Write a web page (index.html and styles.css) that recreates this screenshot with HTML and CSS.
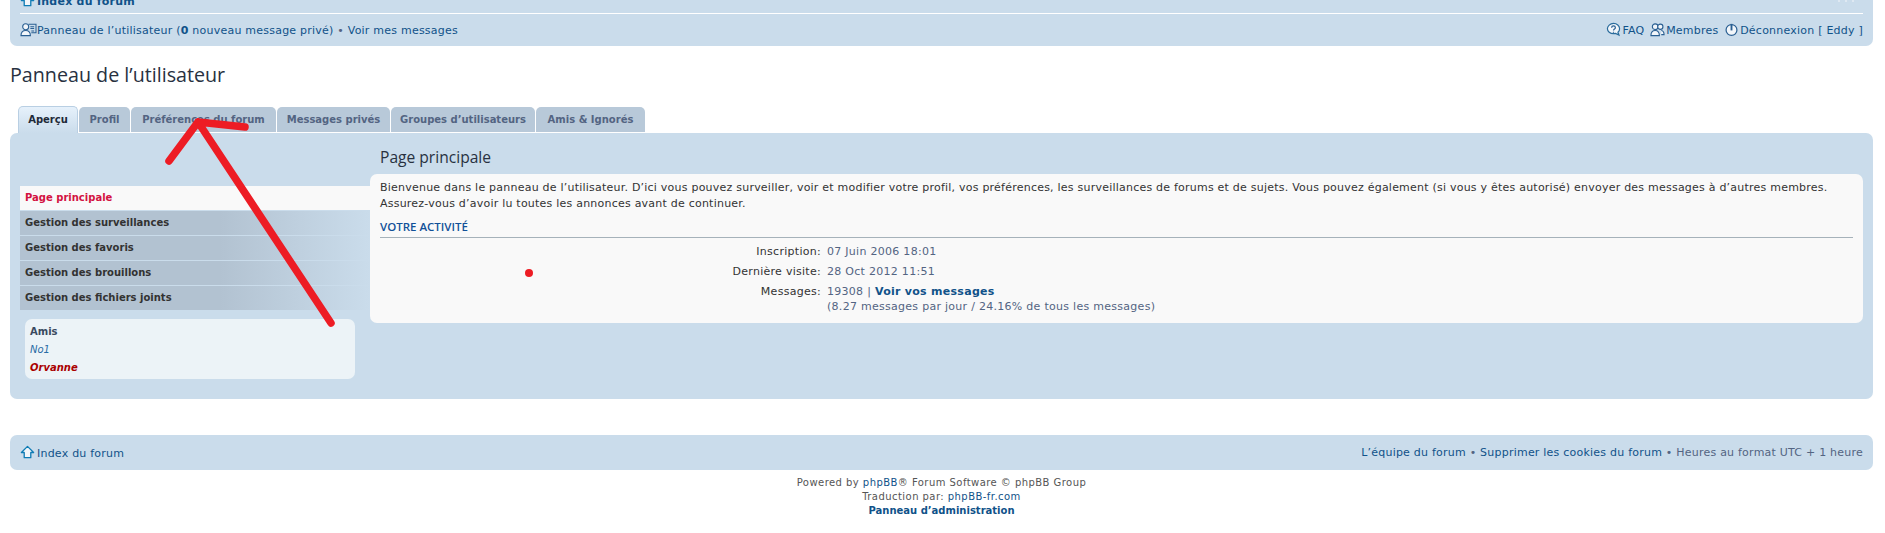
FILE: index.html
```html
<!DOCTYPE html>
<html lang="fr">
<head>
    <meta charset="UTF-8">
    <meta name="viewport" content="width=device-width, initial-scale=1.0">
    <title>Panneau de l’utilisateur</title>
    <link rel="stylesheet" href="styles.css">
</head>
<body>
    <div class="wrap">
        <div class="navbar navbar-top">
            <div class="crumbs">
                <div>
                    <svg class="icon icon-home" viewBox="0 0 16 16"><path d="M8 1.500 14.500 8H11.500v5.500h-7V8H1.500z" fill="#f2f6fa" stroke="#0f7cb5" stroke-width="1.400" stroke-linejoin="round"/></svg><a href="#" class="strong">Index du forum</a>
                </div>
                <svg class="crumb-tools" viewBox="0 0 18 2"><circle cx="2" cy="1" r="1"/><circle cx="9" cy="1" r="1"/><circle cx="16" cy="1" r="1"/></svg>
            </div>
            <div class="navbar-row">
                <div class="navbar-left">
                    <svg class="icon icon-wide" viewBox="0 0 18 16"><circle cx="6" cy="5" r="3.200" fill="#f2f6fa" stroke="#2a5f92" stroke-width="1.200"/><path d="M1 14.500c0-4 2-5.500 5-5.500s5 1.500 5 5.500z" fill="#f2f6fa" stroke="#2a5f92" stroke-width="1.200"/><path d="M9 2.500h8v9h-5M11 5h4M11 7h4M12 9.500h3" fill="none" stroke="#2a5f92" stroke-width="1.100"/></svg><a href="#">Panneau de l’utilisateur (<b>0</b> nouveau message privé)</a> <span class="dot">•</span> <a href="#">Voir mes messages</a>
                </div>
                <div class="navbar-right">
                    <svg class="icon" viewBox="0 0 16 16"><path d="M8 1.500c3.600 0 6.500 2.500 6.500 5.700 0 1.500-.6 2.800-1.700 3.800l1 3-3.600-1.900c-.7.200-1.400.300-2.200.300-3.600 0-6.500-2.400-6.500-5.200S4.400 1.500 8 1.500z" fill="#f2f6fa" stroke="#2a6c9c" stroke-width="1.300"/><path d="M6 6c0-2.600 4-2.600 4 0 0 1.500-2 1.500-2 3M8 10.300v1.200" fill="none" stroke="#2a5f92" stroke-width="1.300"/></svg><a href="#">FAQ</a>
                    <svg class="icon icon-gap" viewBox="0 0 16 16"><circle cx="5.500" cy="5" r="3" fill="#f2f6fa" stroke="#2a5f92" stroke-width="1.200"/><circle cx="11" cy="5" r="2.800" fill="#f2f6fa" stroke="#2a5f92" stroke-width="1.200"/><path d="M12 9c2 .3 3 1.600 3 4.500h-3M1 14.500c0-4 1.800-5.500 4.500-5.500s4.500 1.500 4.500 5.500z" fill="#f2f6fa" stroke="#2a5f92" stroke-width="1.200"/></svg><a href="#">Membres</a>
                    <svg class="icon icon-gap" viewBox="0 0 16 16"><circle cx="8" cy="8.500" r="5.800" fill="#f2f6fa" stroke="#2a5f92" stroke-width="1.300"/><path d="M8 2v7" stroke="#2a5f92" stroke-width="2"/></svg><a href="#">Déconnexion</a> <a href="#">[ Eddy ]</a>
                </div>
            </div>
        </div>

        <h2 class="page-title">Panneau de l’utilisateur</h2>

        <ul class="tabs">
            <li class="tab active"><a href="#">Aperçu</a></li>
            <li class="tab"><a href="#">Profil</a></li>
            <li class="tab"><a href="#">Préférences du forum</a></li>
            <li class="tab"><a href="#">Messages privés</a></li>
            <li class="tab"><a href="#">Groupes d’utilisateurs</a></li>
            <li class="tab"><a href="#">Amis &amp; Ignorés</a></li>
        </ul>

        <div class="panel">
            <div class="sidebar">
                <ul class="side-menu">
                    <li class="current"><a href="#">Page principale</a></li>
                    <li><a href="#">Gestion des surveillances</a></li>
                    <li><a href="#">Gestion des favoris</a></li>
                    <li><a href="#">Gestion des brouillons</a></li>
                    <li><a href="#">Gestion des fichiers joints</a></li>
                </ul>
                <div class="friends">
                    <div class="friends-title">Amis</div>
                    <div class="friend">No1</div>
                    <div class="friend friend-admin">Orvanne</div>
                </div>
            </div>
            <div class="main">
                <h2 class="main-title">Page principale</h2>
                <div class="content">
                    <p class="intro">Bienvenue dans le panneau de l’utilisateur. D’ici vous pouvez surveiller, voir et modifier votre profil, vos préférences, les surveillances de forums et de sujets. Vous pouvez également (si vous y êtes autorisé) envoyer des messages à d’autres membres. Assurez-vous d’avoir lu toutes les annonces avant de continuer.</p>
                    <h3 class="section-title">VOTRE ACTIVITÉ</h3>
                    <dl class="details">
                        <dt>Inscription:</dt>
                        <dd>07 Juin 2006 18:01</dd>
                        <dt>Dernière visite:</dt>
                        <dd>28 Oct 2012 11:51</dd>
                        <dt>Messages:</dt>
                        <dd>19308 | <a href="#" class="strong">Voir vos messages</a><br>(8.27 messages par jour / 24.16% de tous les messages)</dd>
                    </dl>
                </div>
            </div>
        </div>

        <div class="navbar navbar-bottom">
            <div class="navbar-left">
                <svg class="icon icon-home" viewBox="0 0 16 16"><path d="M8 1.500 14.500 8H11.500v5.500h-7V8H1.500z" fill="#f2f6fa" stroke="#0f7cb5" stroke-width="1.400" stroke-linejoin="round"/></svg><a href="#">Index du forum</a>
            </div>
            <div class="navbar-right">
                <a href="#">L’équipe du forum</a> <span class="dot">•</span> <a href="#">Supprimer les cookies du forum</a> <span class="dot">•</span> <span class="muted">Heures au format UTC + 1 heure</span>
            </div>
        </div>

        <div class="copyright">
            Powered by <a href="#">phpBB</a>® Forum Software © phpBB Group<br>
            Traduction par: <a href="#">phpBB-fr.com</a><br>
            <a href="#" class="strong admin-link">Panneau d’administration</a>
        </div>
    </div>

    <!-- hand drawn markup on top of the screenshot -->
    <svg class="scribble" viewBox="0 0 1885 533">
        <path d="M331 323 198 122M198 122 169 161M198 122 245 127" fill="none" stroke="#ed1c24" stroke-width="7.500" stroke-linecap="round" stroke-linejoin="round"/>
        <circle cx="529" cy="273" r="4" fill="#ed1c24"/>
    </svg>
</body>
</html>
```

FILE: styles.css
```css
html, body {
    margin: 0;
    height: 100%;
    overflow: hidden;
}

body {
    position: relative;
    background: #fff;
    color: #536482;
    font-family: "DejaVu Sans", Verdana, sans-serif;
    font-size: 11px;
    line-height: 14px;
    letter-spacing: 0.225px;
}

a {
    color: #105289;
    text-decoration: none;
}

.strong {
    font-weight: bold;
}

.wrap {
    padding: 0 12px 0 10px;
}

.navbar {
    background: #cadceb;
    border-radius: 7px;
    padding: 0 10px;
}

.navbar-top {
    margin-top: -11px;
    padding-top: 4px;
    padding-bottom: 7px;
    border-radius: 0 0 7px 7px;
}

.crumbs {
    display: flex;
    justify-content: space-between;
    height: 20px;
    border-bottom: 1px solid #fff;
    line-height: 16px;
}

.crumb-tools {
    width: 18px;
    height: 2px;
    margin: 7px 8px 0 0;
    fill: #e4edf5;
}

.navbar-row {
    display: flex;
    justify-content: space-between;
    margin-top: 8px;
    line-height: 16px;
}

.icon {
    width: 15px;
    height: 15px;
    margin-right: 1px;
    vertical-align: -3px;
}

.icon-home {
    margin-right: 2px;
}

.icon-wide {
    width: 17px;
    margin-right: 0;
}

.icon-gap {
    margin-left: 2px;
}

.dot {
    color: #536482;
}

.muted {
    color: #536482;
}

.page-title {
    margin: 17px 0 0 0;
    height: 43px;
    font-family: "Open Sans", sans-serif;
    font-size: 19.700px;
    font-weight: 400;
    line-height: 24px;
    letter-spacing: 0;
    color: #28313f;
}

.tabs {
    display: flex;
    gap: 1px;
    list-style: none;
    margin: 0 0 0 8px;
    padding: 0;
    height: 27px;
}

.tab {
    background: #b8c9d9;
    border-radius: 5px 5px 0 0;
    font-size: 10px;
    font-weight: bold;
    line-height: 26px;
    letter-spacing: 0;
    text-align: center;
    white-space: nowrap;
    height: 25px;
    margin-top: 1px;
}

.tab:nth-child(2) { width: 51px; }
.tab:nth-child(3) { width: 145px; }
.tab:nth-child(4) { width: 113px; }
.tab:nth-child(5) { width: 144px; }
.tab:nth-child(6) { width: 109px; }

.tab a {
    color: #536482;
}

.tab.active {
    box-sizing: border-box;
    width: 60px;
    background: linear-gradient(#e6f1fb, #cadceb);
    border: 1px solid #b9cfe3;
    border-bottom: 0;
    height: 27px;
    margin-top: 0;
}

.tab.active a {
    color: #1f2a38;
}

.panel {
    display: flex;
    align-items: flex-start;
    background: #cadceb;
    border-radius: 7px;
    height: 266px;
    box-sizing: border-box;
    padding: 0 10px;
}

.sidebar {
    width: 350px;
    flex: none;
    padding-top: 53px;
}

.side-menu {
    list-style: none;
    margin: 0;
    padding: 0;
}

.side-menu li {
    height: 24px;
    margin-bottom: 1px;
    background: linear-gradient(to right, #b2c2d1 0, #b2c2d1 57%, #cadceb 100%);
    font-size: 10px;
    font-weight: bold;
    line-height: 24px;
    letter-spacing: 0;
    padding-left: 5px;
}

.side-menu a {
    color: #323232;
}

.side-menu li.current {
    background: #f9f9f9;
}

.side-menu li.current a {
    color: #d31141;
}

.friends {
    margin: 9px 15px 0 5px;
    height: 60px;
    box-sizing: border-box;
    padding: 4px 5px;
    background: #ecf3f7;
    border-radius: 7px;
    font-size: 10px;
    line-height: 18px;
    letter-spacing: 0;
}

.friends-title {
    font-weight: bold;
    color: #3a4a60;
}

.friend {
    color: #2a6ca5;
    font-style: italic;
}

.friend-admin {
    color: #aa0000;
    font-weight: bold;
}

.main {
    flex: 1;
    min-width: 0;
    position: relative;
    z-index: 1;
}

.main-title {
    margin: 14px 0 0 10px;
    height: 27px;
    font-family: "Open Sans", sans-serif;
    font-size: 15.600px;
    font-weight: 400;
    line-height: 20px;
    letter-spacing: 0;
    color: #28313f;
}

.content {
    background: #f9f9f9;
    border-radius: 7px;
    height: 149px;
    box-sizing: border-box;
    padding: 6px 10px;
    color: #333;
}

.intro {
    margin: 0;
    line-height: 16px;
}

.section-title {
    margin: 8px 0 0 0;
    height: 17px;
    border-bottom: 1px solid #a6b2ba;
    font-family: "Open Sans", sans-serif;
    font-size: 11.500px;
    font-weight: 600;
    line-height: 14px;
    letter-spacing: 0;
    color: #115098;
}

.details {
    display: grid;
    grid-template-columns: 441px 1fr;
    column-gap: 6px;
    row-gap: 5px;
    margin: 6px 0 0 0;
    letter-spacing: 0.28px;
}

.details dt {
    text-align: right;
    color: #333;
    line-height: 15px;
}

.details dd {
    margin: 0;
    color: #536482;
    line-height: 15px;
}

.navbar-bottom {
    display: flex;
    justify-content: space-between;
    align-items: center;
    height: 35px;
    margin-top: 36px;
}

.copyright {
    margin-top: 6px;
    text-align: center;
    font-size: 10px;
    line-height: 14px;
    letter-spacing: 0.45px;
    color: #555;
}

.admin-link {
    letter-spacing: 0;
}

.scribble {
    position: absolute;
    left: 0;
    top: 0;
    width: 1885px;
    height: 533px;
    z-index: 5;
    pointer-events: none;
}
```
